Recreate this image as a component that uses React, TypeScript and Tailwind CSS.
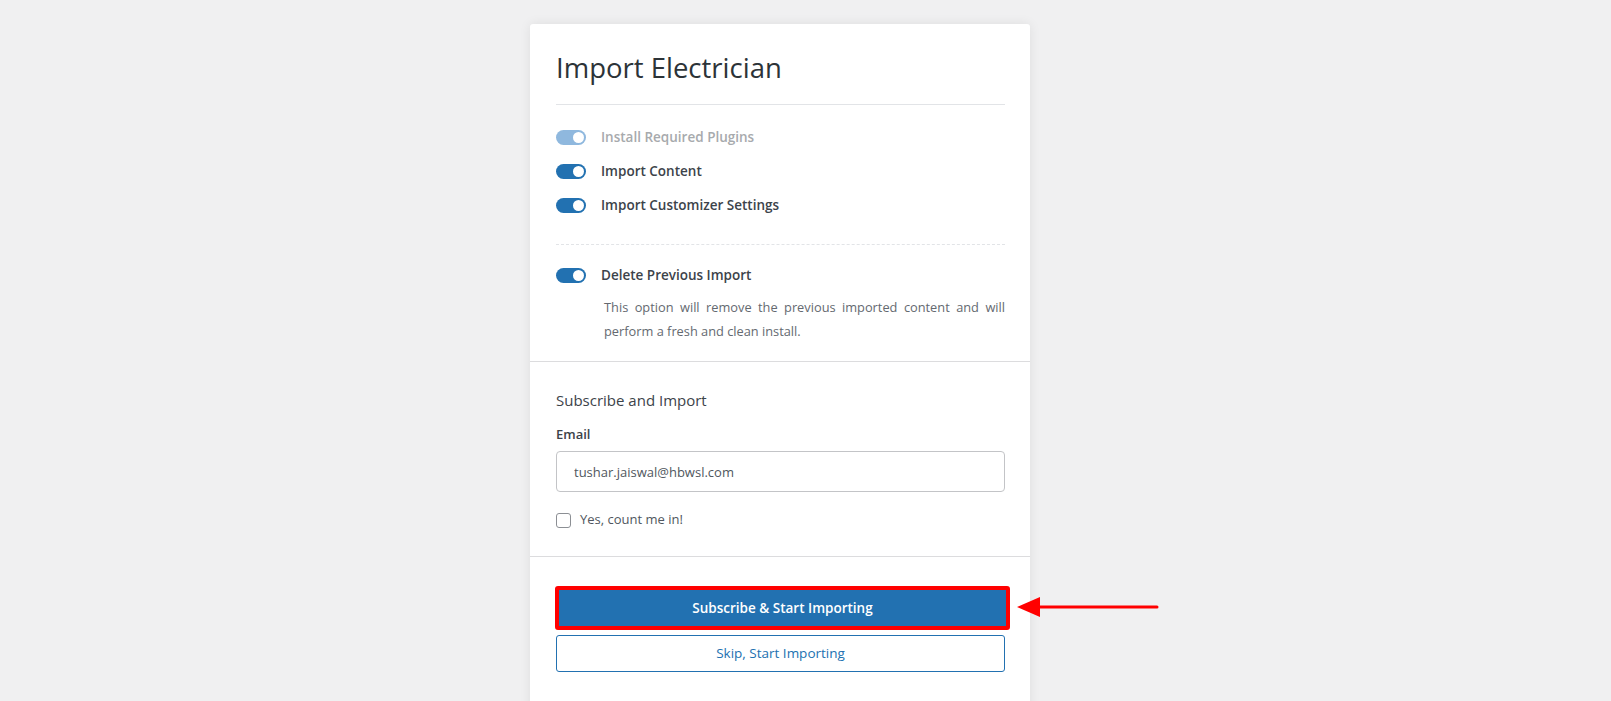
import React from 'react'

const font = { fontFamily: '"Open Sans", "Noto Sans", sans-serif' }

const Toggle = ({ disabled = false }: { disabled?: boolean }) => (
  <span
    className={`relative inline-flex h-[15px] w-[30px] shrink-0 items-center rounded-full ${
      disabled ? 'bg-[#8fb8de]' : 'bg-[#2271b1]'
    }`}
  >
    <span className="absolute right-[2px] h-[11px] w-[11px] rounded-full bg-white" />
  </span>
)

const ToggleRow = ({ label, disabled = false }: { label: string; disabled?: boolean }) => (
  <div className="flex h-[34px] items-center gap-[15px]">
    <Toggle disabled={disabled} />
    <span
      className={`text-[13.5px] font-semibold ${disabled ? 'text-[#a7aaad]' : 'text-[#3c434a]'}`}
    >
      {label}
    </span>
  </div>
)

export default function App() {
  return (
    <div
      className="relative flex h-[701px] justify-center overflow-hidden bg-[#f0f0f1] pr-[51px]"
      style={font}
    >
      <div className="mt-[24px] h-[700px] w-[500px] shrink-0 self-start rounded-t-[3px] bg-white shadow-[0_0_12px_rgba(0,0,0,0.08)]">
        <div className="pl-[26px] pr-[25px] pt-[26px]">
          <h1 className="pb-[18px] text-[27.5px] font-medium leading-[36px] text-[#2c3338]">
            Import Electrician
          </h1>
          <div className="border-t border-[#e2e4e7]" />
          <div className="pt-[15px]">
            <ToggleRow label="Install Required Plugins" disabled />
            <ToggleRow label="Import Content" />
            <ToggleRow label="Import Customizer Settings" />
          </div>
          <div className="mt-[22px] border-t border-dashed border-[#e2e4e7]" />
          <div className="pt-[13px]">
            <ToggleRow label="Delete Previous Import" />
            <p className="ml-[48px] mt-[3px] text-justify text-[12.8px] leading-[24px] text-[#646970]">
              This option will remove the previous imported content and will perform a fresh and
              clean install.
            </p>
          </div>
        </div>
        <div className="mt-[18px] border-t border-[#dcdcde]" />
        <div className="pl-[26px] pr-[25px] pt-[27px] pb-[26px]">
          <h2 className="text-[15px] leading-[22px] text-[#3c434a]">Subscribe and Import</h2>
          <label className="mt-[13px] block text-[13px] font-semibold leading-[20px] text-[#3c434a]">
            Email
          </label>
          <input
            readOnly
            value="tushar.jaiswal@hbwsl.com"
            className="mt-[7px] block h-[41px] w-full rounded-[4px] border border-[#c3c4c7] px-[17px] text-[13px] text-[#50575e] outline-none"
            style={font}
          />
          <label className="mt-[18px] flex h-[20px] items-center gap-[9px] text-[13px] text-[#50575e]">
            <span className="h-[15px] w-[15px] rounded-[3px] border border-[#8c8f94] bg-white" />
            Yes, count me in!
          </label>
        </div>
        <div className="border-t border-[#dcdcde]" />
        <div className="pl-[26px] pr-[25px] pt-[29px] pb-[25px]">
          <div className="-ml-[1px] -mr-[5px] rounded-[3px] border-[4px] border-[#ff0000]">
            <button className="flex h-[36px] w-full items-center justify-center bg-[#2271b1] text-[13.5px] font-semibold text-white">
              Subscribe &amp; Start Importing
            </button>
          </div>
          <button className="mt-[5px] flex h-[37px] w-full items-center justify-center rounded-[3px] border border-[#2271b1] bg-white text-[13.5px] text-[#2271b1]">
            Skip, Start Importing
          </button>
        </div>
      </div>
      <svg
        className="absolute left-[1015px] top-[595px]"
        width="145"
        height="24"
        viewBox="0 0 145 24"
      >
        <line x1="20" y1="12" x2="142" y2="12" stroke="#ff0000" strokeWidth="3" strokeLinecap="round" />
        <polygon points="2,12 25,2 25,22" fill="#ff0000" />
      </svg>
    </div>
  )
}
